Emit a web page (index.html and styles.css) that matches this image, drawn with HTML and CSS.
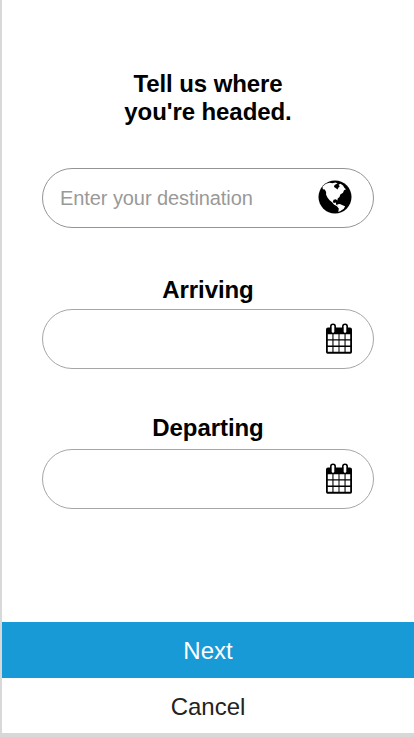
FILE: index.html
```html
<!DOCTYPE html>
<html lang="en">
<head>
<meta charset="utf-8">
<title>Trip details</title>
<link rel="stylesheet" href="styles.css">
</head>
<body>
<form class="screen">
  <h1 class="title">Tell us where<br>you're headed.</h1>
  <div class="field destination">
    <input class="input" type="text" placeholder="Enter your destination" aria-label="Destination">
    <svg class="globe" viewBox="0 0 34 34" aria-hidden="true">
      <circle cx="17" cy="17" r="16.500"/>
      <g fill="#fff">
        <path d="M4.500 6.500 8 3.700l3.500-1 3 .5 3-.7 2 1-3 1.600-.5 1.800 2 1.300 1.500 1.300 1-2 1.300-1.200-1.300-1.500 2-1 2.500 1.700 1.500 2.500 1.500 1.300-2 1-1 2.500-2.700 1.800-.8 2.500-1.800 1.500-.3 2-1.500-1.300-2.300.4-.8 2.300 1.200 1 1.800-.5.3 1.900 2 1.500-1.200.3-3-1.600-1.800-2.300-2.500-2-2-2.600-1.500-3v-2.700l-1.300-2.500-2-.2Z"/>
        <path d="m19.500 24.300 2.400-.4 2.700 1.300 2.500 1-1.300 2.600-3.300 2.200-2.200.9.500-3.400-1.700-2Z"/>
      </g>
    </svg>
  </div>

  <label class="label" for="arriving">Arriving</label>
  <div class="field arriving">
    <input class="input" id="arriving" type="text">
    <svg class="calendar" viewBox="0 0 26 31" aria-hidden="true">
      <path d="M2 4.500h22a2 2 0 0 1 2 2V29a1.700 1.700 0 0 1-1.700 1.700H1.700A1.700 1.700 0 0 1 0 29V6.500a2 2 0 0 1 2-2Z"/>
      <rect x="4" y=".5" width="6" height="11" rx="3"/>
      <rect x="16" y=".5" width="6" height="11" rx="3"/>
      <g fill="#fff">
        <rect x="5.700" y="2" width="2.600" height="7.700" rx="1.300"/>
        <rect x="17.700" y="2" width="2.600" height="7.700" rx="1.300"/>
        <path d="M1.800 11.300h4.600v5H1.800zM7.500 11.300h5v5h-5zM13.500 11.300h5v5h-5zM19.600 11.300h4.600v5h-4.600zM1.800 17.500h4.600v5H1.800zM7.500 17.500h5v5h-5zM13.500 17.500h5v5h-5zM19.600 17.500h4.600v5h-4.600zM1.800 24h4.600v4.700H1.800zM7.500 24h5v4.700h-5zM13.500 24h5v4.700h-5zM19.600 24h4.600v4.700h-4.600z"/>
      </g>
    </svg>
  </div>

  <label class="label departing-label" for="departing">Departing</label>
  <div class="field">
    <input class="input" id="departing" type="text">
    <svg class="calendar" viewBox="0 0 26 31" aria-hidden="true">
      <path d="M2 4.500h22a2 2 0 0 1 2 2V29a1.700 1.700 0 0 1-1.700 1.700H1.700A1.700 1.700 0 0 1 0 29V6.500a2 2 0 0 1 2-2Z"/>
      <rect x="4" y=".5" width="6" height="11" rx="3"/>
      <rect x="16" y=".5" width="6" height="11" rx="3"/>
      <g fill="#fff">
        <rect x="5.700" y="2" width="2.600" height="7.700" rx="1.300"/>
        <rect x="17.700" y="2" width="2.600" height="7.700" rx="1.300"/>
        <path d="M1.800 11.300h4.600v5H1.800zM7.500 11.300h5v5h-5zM13.500 11.300h5v5h-5zM19.600 11.300h4.600v5h-4.600zM1.800 17.500h4.600v5H1.800zM7.500 17.500h5v5h-5zM13.500 17.500h5v5h-5zM19.600 17.500h4.600v5h-4.600zM1.800 24h4.600v4.700H1.800zM7.500 24h5v4.700h-5zM13.500 24h5v4.700h-5zM19.600 24h4.600v4.700h-4.600z"/>
      </g>
    </svg>
  </div>

  <div class="actions">
    <button class="button next" type="submit">Next</button>
    <button class="button cancel" type="button">Cancel</button>
  </div>
</form>
</body>
</html>
```
FILE: styles.css
```css
* {
  box-sizing: border-box;
}

body {
  margin: 0;
  background: #fff;
  color: #000;
  font-family: "Liberation Sans", Arial, sans-serif;
}

.screen {
  display: flex;
  flex-direction: column;
  height: 737px;
  padding-top: 70px;
  border-left: 2px solid #d8d8d8;
  border-bottom: 4px solid #d8d8d8;
}

.title {
  margin: 0 0 42px;
  font-size: 24px;
  line-height: 28px;
  letter-spacing: -0.08px;
  text-align: center;
}

.label {
  height: 33px;
  font-size: 24px;
  font-weight: bold;
  line-height: 28px;
  letter-spacing: -0.08px;
  text-align: center;
}

.field {
  display: flex;
  flex: none;
  align-items: center;
  width: 332px;
  height: 60px;
  margin-left: 40px;
  padding: 0 21px 0 17px;
  border: 1px solid #a6a6a6;
  border-radius: 30px;
}

.destination {
  margin-bottom: 48px;
  border-color: #949494;
}

.arriving {
  margin-bottom: 45px;
}

.departing-label {
  height: 35px;
}

.input {
  flex: 1;
  min-width: 0;
  height: 40px;
  padding: 0;
  border: 0;
  outline: 0;
  background: transparent;
  font: 20px "Liberation Sans", Arial, sans-serif;
  letter-spacing: -0.08px;
}

.input::placeholder {
  color: #999;
  opacity: 1;
}

.globe {
  width: 34px;
  height: 34px;
  margin-bottom: 3px;
}

.calendar {
  width: 26px;
  height: 31px;
  margin-bottom: 1px;
}

.actions {
  display: flex;
  flex-direction: column;
  margin-top: auto;
}

.button {
  height: 55px;
  padding: 0;
  border: 0;
  font: 24px "Liberation Sans", Arial, sans-serif;
}

.next {
  height: 56px;
  padding-top: 2px;
  background: #189ad6;
  color: #fff;
}

.cancel {
  padding-top: 2px;
  background: #fff;
  color: #222;
}
```
